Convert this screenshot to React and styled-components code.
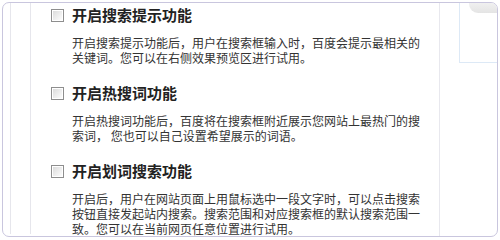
import React from "react";
import styled, { createGlobalStyle } from "styled-components";

const GlobalStyle = createGlobalStyle`
  html, body {
    margin: 0;
    padding: 0;
    background: #fff;
  }
  body {
    font-family: "Noto Sans CJK SC", "Noto Sans", sans-serif;
  }
`;

const options = [
  {
    title: "开启搜索提示功能",
    desc: "开启搜索提示功能后，用户在搜索框输入时，百度会提示最相关的关键词。您可以在右侧效果预览区进行试用。",
  },
  {
    title: "开启热搜词功能",
    desc: "开启热搜词功能后，百度将在搜索框附近展示您网站上最热门的搜索词， 您也可以自己设置希望展示的词语。",
  },
  {
    title: "开启划词搜索功能",
    desc: "开启后，用户在网站页面上用鼠标选中一段文字时，可以点击搜索按钮直接发起站内搜索。搜索范围和对应搜索框的默认搜索范围一致。您可以在当前网页任意位置进行试用。",
  },
];

export default function App() {
  return (
    <>
      <GlobalStyle />
      <Frame>
        <Gutter $width={7} />
        <Gutter $width={19} />
        <Main>
          {options.map((o) => (
            <Option key={o.title}>
              <TitleRow>
                <Check />
                <Title>{o.title}</Title>
              </TitleRow>
              <Desc>{o.desc}</Desc>
            </Option>
          ))}
        </Main>
        <Side>
          <Preview>
            <PreviewTab />
          </Preview>
        </Side>
      </Frame>
    </>
  );
}

const Frame = styled.div`
  margin: 2px 0 0 2px;
  width: 496px;
  height: 235px;
  box-sizing: border-box;
  border: 1px solid #c9c6de;
  border-radius: 7px;
  display: flex;
  overflow: hidden;
`;

const Gutter = styled.div`
  width: ${(p) => p.$width}px;
  flex: none;
  border-right: 1px solid #e6e6ec;
  margin-bottom: 2px;
`;

const Main = styled.div`
  width: 409px;
  flex: none;
  border-right: 1px solid #e8e8ee;
  padding: 2px 0 0 20px;
  box-sizing: border-box;
`;

const Option = styled.div`
  margin-bottom: 18px;
`;

const TitleRow = styled.div`
  display: flex;
  align-items: center;
  gap: 8px;
  height: 20px;
  margin-bottom: 10px;
`;

const Check = styled.span`
  width: 11px;
  height: 11px;
  flex: none;
  border: 1px solid #8e8e8e;
  background: linear-gradient(135deg, #d8d8d8 0%, #f4f4f4 70%, #ffffff 100%);
  box-shadow: inset 0 0 0 1px #fff;
`;

const Title = styled.span`
  font-size: 15px;
  font-weight: bold;
  color: #222;
  line-height: 20px;
`;

const Desc = styled.p`
  margin: 0 0 0 21px;
  width: 350px;
  font-size: 12px;
  line-height: 15px;
  color: #333;
`;

const Side = styled.div`
  flex: 1;
  padding-left: 19px;
`;

const Preview = styled.div`
  height: 59px;
  border-left: 1px solid #dde9f6;
  border-bottom: 1px solid #dde9f6;
  padding-left: 9px;
`;

const PreviewTab = styled.div`
  height: 10px;
  background: linear-gradient(#f0f0f0, #e4e4e4);
  border-bottom-left-radius: 9px;
`;
